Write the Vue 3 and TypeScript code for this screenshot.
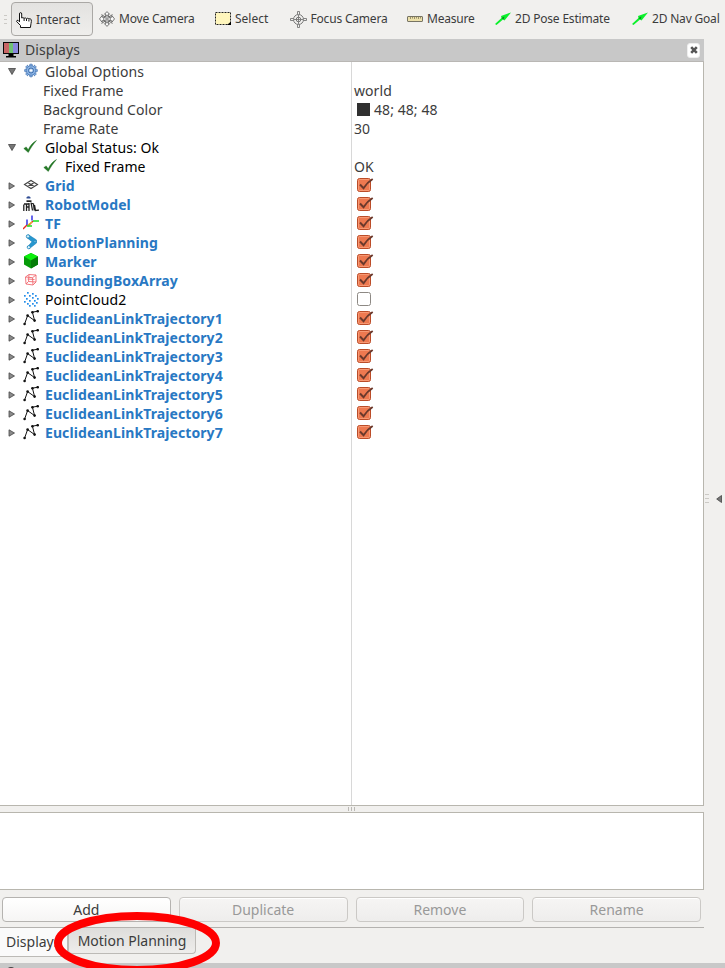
<script setup lang="ts">
interface Tool { id: string; label: string; active?: boolean }
interface Row {
  label: string
  icon?: string
  kind: 'group' | 'property' | 'status' | 'child' | 'enabled' | 'disabled'
  arrow?: 'open' | 'closed'
  value?: string
  swatch?: boolean
  checked?: boolean
}

const tools: Tool[] = [
  { id: 'interact', label: 'Interact', active: true },
  { id: 'move', label: 'Move Camera' },
  { id: 'select', label: 'Select' },
  { id: 'focus', label: 'Focus Camera' },
  { id: 'measure', label: 'Measure' },
  { id: 'pose', label: '2D Pose Estimate' },
  { id: 'goal', label: '2D Nav Goal' },
]

const display = (label: string, icon: string): Row => ({ label, icon, kind: 'enabled', arrow: 'closed', checked: true })

const rows: Row[] = [
  { label: 'Global Options', icon: 'gear', kind: 'group', arrow: 'open' },
  { label: 'Fixed Frame', kind: 'property', value: 'world' },
  { label: 'Background Color', kind: 'property', value: '48; 48; 48', swatch: true },
  { label: 'Frame Rate', kind: 'property', value: '30' },
  { label: 'Global Status: Ok', icon: 'ok', kind: 'status', arrow: 'open' },
  { label: 'Fixed Frame', icon: 'ok', kind: 'child', value: 'OK' },
  display('Grid', 'grid'),
  display('RobotModel', 'robot'),
  display('TF', 'tf'),
  display('MotionPlanning', 'motion'),
  display('Marker', 'marker'),
  display('BoundingBoxArray', 'boxes'),
  { label: 'PointCloud2', icon: 'cloud', kind: 'disabled', arrow: 'closed', checked: false },
  ...[1, 2, 3, 4, 5, 6, 7].map((n) => display(`EuclideanLinkTrajectory${n}`, 'path')),
]

const teeth = [0, 45, 90, 135]
const points = [[4, 1], [9, 2], [1, 4], [6, 4], [12, 4], [3, 7], [9, 6], [14, 7], [6, 9], [11, 9], [1, 10], [4, 12], [9, 12], [13, 11], [6, 14], [11, 14]]
const waypoints = [[1.6, 14], [4.6, 5.6], [11.6, 10.6], [9.4, 2.2], [14.7, 1.2]]
const buttons = ['Add', 'Duplicate', 'Remove', 'Rename']
</script>

<template>
  <div class="window">
    <header class="toolbar">
      <span class="grip"><i /><i /><i /></span>
      <div v-for="t in tools" :key="t.id" class="tool" :class="[t.id, { active: t.active }]">
        <svg v-if="t.id === 'interact'" width="16" height="16" viewBox="0 0 16 16">
          <path d="M3.500 10V2Q3.500.6 4.600.6T5.700 2v4q1.200-.9 2.400.3 1.200-.9 2.400.3 1.200-.8 2.400.3 1.300-.5 2.300.6 .4 2-.2 4l-.6 4H4.500v-2L.6 9.500q.2-1.600 1.400-1.200l1.500 1.500M8.100 6.500v2.500M10.500 7v2M12.900 7.500v2" fill="#fff" stroke="#111" />
        </svg>
        <svg v-else-if="t.id === 'move'" width="16" height="16" viewBox="0 0 16 16" fill="#fafafa" stroke="#555" stroke-width=".8">
          <path d="M2.500 3.500l3 2M13.500 3.500l-3 2M2.500 12.500l3-2M13.500 12.500l-3-2" />
          <path d="M8 .6l2.500 2.600H9.200v3h3.600V4.500l2.700 3.400-2.700 3.400V9.700H9.200v3h1.300L8 15.400l-2.500-2.700h1.300v-3H3.200v1.600L.5 7.900l2.700-3.400v1.700h3.600v-3H5.500z" />
          <circle cx="8" cy="8" r="3.400" fill="none" /><circle cx="8" cy="8" r="1.200" />
        </svg>
        <svg v-else-if="t.id === 'select'" width="16" height="14" viewBox="0 0 16 14">
          <rect x=".5" y=".5" width="15" height="12" fill="#fff6bd" stroke="#222" stroke-dasharray="2 1" /><path d="M16 9.500V13h-4z" />
        </svg>
        <svg v-else-if="t.id === 'focus'" width="17" height="17" viewBox="0 0 17 17" fill="none" stroke="#777">
          <circle cx="8.500" cy="8.500" r="5" /><circle cx="8.500" cy="8.500" r="2.300" />
          <path d="M7.500 3.500V.5h2v3M7.500 13.500v3h2v-3M3.500 7.500h-3v2h3M13.500 7.500h3v2h-3M8.500 4v9M4 8.500h9" stroke-width=".9" />
        </svg>
        <svg v-else-if="t.id === 'measure'" width="16" height="6" viewBox="0 0 16 6">
          <rect x=".5" y=".5" width="15" height="5" rx=".5" fill="#ece0aa" stroke="#777464" /><path d="M3.500 1v2M5.500 1v1.500M7.500 1v2M9.500 1v1.500M11.500 1v2M13.500 1v1.500" stroke="#847b59" stroke-width=".8" />
        </svg>
        <svg v-else width="16" height="14" viewBox="0 0 16 14">
          <path d="M0 12l6.500-6L6 4 16 .5 9.500 8.500 8 7.500 1.500 13z" fill="#0bf02b" /><path d="M6.500 6l2 1.500 1-3z" fill="#078b1c" />
        </svg>
        <span class="tool-label">{{ t.label }}</span>
      </div>
    </header>

    <div class="workspace">
      <main class="dock">
        <div class="dock-title">
          <svg width="16" height="16" viewBox="0 0 16 16">
            <path d="M0 0h16v12H0z" fill="#080808" /><path d="M1 1h5v10H1z" fill="#c86666" /><path d="M6 1h4v10H6z" fill="#70c274" /><path d="M10 1h5v10h-5z" fill="#8988dd" /><path d="M5.500 12h5v2h2.500v1.500H3V14h2.500z" />
          </svg>
          <span class="title">Displays</span>
          <button class="close" aria-label="Close">
            <svg width="8" height="8" viewBox="0 0 8 8"><path d="M1.200 1.200l5.600 5.600M6.800 1.200L1.200 6.800" stroke="#555" stroke-width="2.600" /></svg>
          </button>
        </div>

        <section class="tree">
          <div v-for="(row, i) in rows" :key="i" class="row" :class="row.kind">
            <div class="name">
              <span class="arrow">
                <svg v-if="row.arrow === 'open'" width="8" height="7" viewBox="0 0 8 7"><path d="M.5.5h7L4 6.500z" fill="#777" stroke="#454545" stroke-width=".8" /></svg>
                <svg v-else-if="row.arrow === 'closed'" width="7" height="8" viewBox="0 0 7 8"><path d="M1 .8v6.400L6.500 4z" fill="#8b8b8b" stroke="#484848" stroke-width=".8" /></svg>
              </span>
              <svg v-if="row.icon" class="icon" width="16" height="16" viewBox="0 0 16 16">
                <g v-if="row.icon === 'gear'">
                  <g fill="#88b2e5" stroke="#3869a9" stroke-width=".7"><rect v-for="a in teeth" :key="a" x="6.700" y="1.200" width="2.600" height="12.600" rx=".6" :transform="`rotate(${a} 8 7.500)`" /></g>
                  <circle cx="8" cy="7.500" r="4.700" fill="#8db5e5" stroke="#3f70af" stroke-width=".6" /><circle cx="8" cy="7.500" r="2.500" fill="#bdd5f0" stroke="#3769aa" /><circle cx="8" cy="7.500" r="1" fill="#fff" />
                </g>
                <path v-else-if="row.icon === 'ok'" d="M.8 9.500l2.400-1.600 2 2.800C7.500 6 10 3.500 13.500 1.500 10 5.500 7.800 9 5.300 13.500z" fill="#237a25" stroke="#176619" stroke-width=".4" />
                <path v-else-if="row.icon === 'grid'" d="M1.500 7.500L8 3.500l6.500 4L8 11.500zM4.700 5.500l6.600 4M11.300 5.500l-6.600 4" fill="none" stroke="#444" stroke-width="1.100" />
                <g v-else-if="row.icon === 'robot'">
                  <path d="M3.500 1.200Q5.500-.5 7.500 1.200v1.300h-4z" fill="#304d94" /><path d="M3.500 4.300h5v1.700h-5z" fill="#222" />
                  <path d="M.8 15V8.500M1 8h5M3.500 8v7M6 7v8M3.500 11h2.500M8 6.500l1.500 8M8 7l2.500 1 .8 6.500M11.500 9l1 5.500 3.500-.3" fill="none" stroke="#222" stroke-width="1.300" />
                </g>
                <g v-else-if="row.icon === 'tf'" fill="none" stroke-width="1.400">
                  <path d="M4 10L0 14M10 6L5 11" stroke="#e82b22" /><path d="M4 4.500V10M9 0.500v5" stroke="#2525e4" /><path d="M10 6h6M4 11h5" stroke="#17e222" /><path d="M5 10l4-3" stroke="#e4b529" />
                </g>
                <g v-else-if="row.icon === 'motion'" stroke="#1480b9" fill="#2797cf">
                  <path d="M5.500.8L13.500 6v3L6.500 14.500 4.500 13 9 7.700 3.800 3.500z" stroke-width=".6" /><circle cx="5" cy="2.400" r="1.700" fill="#d0edf7" stroke-width=".8" /><circle cx="12" cy="7.500" r="1.200" fill="#66b4dc" stroke-width=".5" /><circle cx="5.800" cy="13.200" r="1.600" fill="#e1f4fb" stroke-width=".8" />
                </g>
                <g v-else-if="row.icon === 'marker'"><path d="M8 0l7 3.500v8L8 15.500 1 11.500v-8z" fill="#079b0a" /><path d="M8 0l7 3.500-7 4-7-4z" fill="#0cf00c" /><path d="M8 7.500l7-4v8l-7 4z" fill="#057c08" /></g>
                <path v-else-if="row.icon === 'boxes'" d="M2.500 5L6 2.500l7 .5v7l-3 3-7-1zM2.500 5l7 .7 3.500-2.700M9.500 5.700L10 13M6 2.500l-.5 7 7.500.5M5.500 9.500L3 12M4.500 7l7 .5" fill="none" stroke="#f16a70" stroke-width=".9" />
                <g v-else-if="row.icon === 'cloud'" fill="#238eea"><rect v-for="([x, y], n) in points" :key="n" :x="x" :y="y" width="1.700" height="1.700" /></g>
                <g v-else fill="#111">
                  <polyline :points="waypoints.join(' ')" fill="none" stroke="#111" />
                  <circle v-for="([x, y], n) in waypoints" :key="n" :cx="x" :cy="y" r="1.300" />
                </g>
              </svg>
              <span class="row-label">{{ row.label }}</span>
            </div>
            <div class="value">
              <i v-if="row.swatch" class="swatch" />
              <span v-if="row.value">{{ row.value }}</span>
              <svg v-if="row.checked !== undefined" class="check" width="18" height="17" viewBox="0 0 18 17">
                <rect x="1.500" y="2.500" width="13" height="13" rx="2" :fill="row.checked ? '#ee7950' : '#fff'" :stroke="row.checked ? '#bb4c28' : '#8d8984'" />
                <g v-if="row.checked"><rect x="2.500" y="3.500" width="11" height="11" rx="1" fill="none" stroke="#f9a17d" stroke-width=".8" /><path d="M4 8.500l3.500 3.700Q11 6.500 16.700 3" fill="none" stroke="#6a392c" stroke-width="2" /></g>
              </svg>
            </div>
          </div>
          <div class="filler"><i /></div>
        </section>

        <div class="splitter"><i /><i /><i /></div>
        <section class="description" />
        <div class="actions">
          <button v-for="(b, i) in buttons" :key="b" :disabled="i > 0">{{ b }}</button>
        </div>
        <nav class="tabs">
          <button class="tab selected">Displays</button>
          <button class="tab second">Motion Planning</button>
        </nav>
      </main>
      <aside class="side"><span class="grip"><i /><i /><i /></span><svg width="6" height="8" viewBox="0 0 6 8"><path d="M5.500.5v7L.7 4z" fill="#777" stroke="#444" stroke-width=".8" /></svg></aside>
    </div>
    <footer class="next-dock"><i /></footer>
    <svg class="annotation" width="170" height="62" viewBox="0 0 170 62"><ellipse cx="84" cy="32" rx="79" ry="27" fill="none" stroke="#f00" stroke-width="8" /></svg>
  </div>
</template>

<style>
body { margin: 0; overflow: hidden; }
</style>

<style scoped>
* { box-sizing: border-box; }
.window { position: relative; display: flex; flex-direction: column; width: 725px; height: 968px; overflow: hidden; background: #f1f0ee; color: #3c3c3c; font-family: "Noto Sans", sans-serif; font-size: 14px; }
svg { display: block; flex: none; }
button { font: inherit; color: inherit; padding: 0; }
.toolbar { display: flex; height: 39px; flex: none; padding: 0 0 0 3px; font-size: 12px; white-space: nowrap; letter-spacing: -.19px; }
.grip { display: flex; flex-direction: column; justify-content: center; gap: 3px; width: 4px; height: 39px; }
.grip i { height: 1px; background: #cbc9c5; }
.tool { display: flex; align-items: center; height: 34px; margin-top: 2px; gap: 4px; flex: none; }
.tool-label { line-height: 20px; }
.tool.active { width: 82px; margin-left: 4px; padding: 2px 0 0 4px; border: 1px solid #aaa8a5; border-radius: 4px; background: linear-gradient(#e3e2e0, #efeeec); letter-spacing: 0; }
.tool.active { margin-left: 4px; position: relative; left: 0; }
.toolbar { padding-left: 4px; }
.move { margin-left: 6px; width: 116px; }
.select { width: 75px; letter-spacing: 0; }
.focus { width: 117px; gap: 3.500px; }
.measure { width: 88px; }
.pose { width: 137px; }
.goal { width: 93px; }
.workspace { display: flex; height: 924px; flex: none; }
.dock { display: flex; flex-direction: column; width: 704px; }
.dock-title { display: flex; align-items: center; height: 23px; flex: none; padding: 0 3px; gap: 6px; background: #c8c8c8; border-bottom: 1px solid #b9b7b4; }
.title { margin-top: -2px; letter-spacing: .06px; }
.close { display: flex; align-items: center; justify-content: center; width: 13px; height: 15px; margin: 0 1px 0 auto; border: 1px solid #eee; border-radius: 3px; background: #fff; }
.tree { display: flex; flex-direction: column; height: 744px; flex: none; background: #fff; border-right: 1px solid #b8b6ae; border-bottom: 1px solid #b8b6ae; }
.row { display: flex; height: 19px; flex: none; line-height: 19px; white-space: nowrap; letter-spacing: .07px; }
.name { display: flex; width: 352px; border-right: 1px solid #d8d8d8; padding-left: 8px; }
.arrow { display: flex; width: 15px; align-items: center; }
.icon { margin: 1px 6px 0 0; }
.property .name { padding-left: 28px; }
.child .name { padding-left: 28px; }
.status, .disabled, .child .name { color: #000; }
.enabled .row-label { color: #2878c3; font-weight: 700; letter-spacing: .09px; }
.value { display: flex; padding-left: 2px; }
.swatch { width: 13px; height: 13px; margin: 3px 4px 0 3px; background: #303030; }
.check { margin-left: 2px; }
.filler { display: flex; flex: 1; }
.filler i { width: 352px; border-right: 1px solid #d8d8d8; }
.splitter { display: flex; justify-content: center; align-items: center; gap: 2px; height: 6px; flex: none; padding-right: 1px; }
.splitter i { width: 1px; height: 4px; background: #bbb9b5; }
.description { height: 78px; flex: none; background: #fff; border: 1px solid #b8b6ae; border-left: 0; }
.actions { display: grid; grid-template-columns: repeat(4, 1fr); gap: 8px; height: 38px; flex: none; padding: 7px 3px 0 2px; border-bottom: 1px solid #b4b2af; }
.actions button { height: 25px; border: 1px solid #b5b3b0; border-radius: 4px; background: linear-gradient(#fff, #f6f5f4); box-shadow: inset 0 1px #fff; }
.actions button:disabled { color: #999; border-color: #cbc9c6; background: linear-gradient(#f6f5f4, #eeedec); }
.tabs { display: flex; height: 35px; }
.tab { border: 1px solid #bcbab6; border-top: 0; }
.tab.selected { width: 68px; height: 29px; padding: 0 0 2px 6px; text-align: left; background: #fafafa; border-left: 0; border-radius: 0 0 4px 0; }
.tab.second { width: 128px; height: 26px; background: linear-gradient(#dedddb, #eeedeb); border-radius: 0 0 4px 4px; }
.side { display: flex; align-items: center; width: 21px; padding: 0 3px 5px 1px; justify-content: space-between; }
.next-dock { height: 5px; background: #c8c8c8; padding: 4px 0 0 7px; flex: none; overflow: hidden; }
.next-dock i { display: block; width: 8px; height: 8px; border-radius: 50%; background: #444; }
.annotation { position: absolute; left: 53px; top: 911px; }
</style>
